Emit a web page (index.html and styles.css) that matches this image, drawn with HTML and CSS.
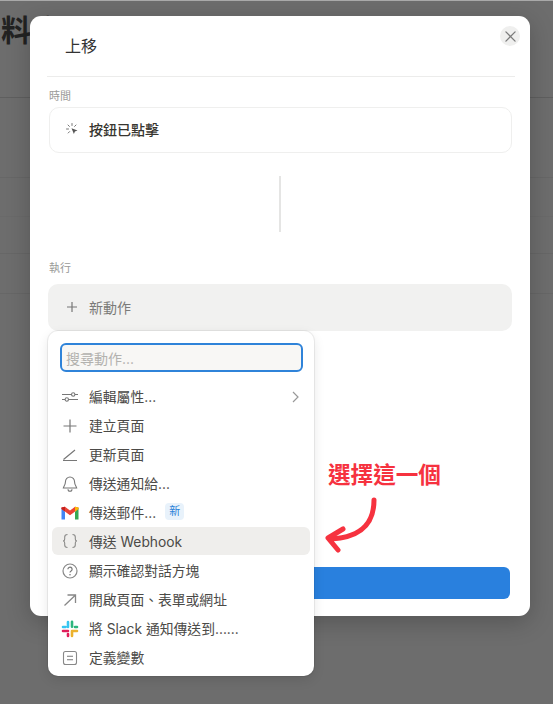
FILE: index.html
```html
<!DOCTYPE html>
<html lang="zh-Hant">
<head>
<meta charset="utf-8">
<title>上移</title>
<link rel="stylesheet" href="styles.css">
</head>
<body>
<div class="page">
  <h1 class="page-title">料庫</h1>
  <div class="bg-rows">
    <div class="bg-row r1"></div>
    <div class="bg-row r2"></div>
    <div class="bg-row r3"></div>
    <div class="bg-row r4"></div>
  </div>
</div>

<div class="modal">
  <div class="modal-head">上移</div>
  <button class="close" aria-label="關閉">
    <svg width="11" height="11" viewBox="0 0 12 12"><path d="M1 1l10 10M11 1L1 11" fill="none" stroke="#7b7b7b" stroke-width="1.4" stroke-linecap="round"/></svg>
  </button>
  <div class="modal-body">
    <div class="label">時間</div>
    <div class="trigger">
      <svg class="trigger-icon" width="14" height="14" viewBox="0 0 14 14"><g fill="none" stroke="#777" stroke-width="1" stroke-linecap="round"><path d="M7 1.500v2M3 3l1.400 1.400M1.500 7h2M11 3L9.600 4.400M3.200 11l1.400-1.400"/></g><path d="M6.500 6.200l6 2.200-2.600 1-1 2.700z" fill="#555"/></svg>
      <span>按鈕已點擊</span>
    </div>
    <div class="connector"></div>
    <div class="label">執行</div>
    <div class="new-action">
      <svg width="12" height="12" viewBox="0 0 12 12"><path d="M6 1v10M1 6h10" stroke="#777" stroke-width="1.200" fill="none"/></svg>
      <span>新動作</span>
    </div>
    <div class="primary"></div>
  </div>
</div>

<div class="menu">
  <div class="search">搜尋動作...</div>
  <ul class="menu-list">
    <li class="item">
      <svg class="ico" viewBox="0 0 18 18"><g fill="none" stroke="#777" stroke-width="1.100"><path d="M1 6.500h9.500M14 6.500h3M1 11.500h3M7.500 11.500H17"/><circle cx="12.200" cy="6.500" r="1.700"/><circle cx="5.800" cy="11.500" r="1.700"/></g></svg>
      <span>編輯屬性...</span>
      <svg class="chev" width="7" height="12" viewBox="0 0 7 12"><path d="M1 1l5 5-5 5" fill="none" stroke="#999" stroke-width="1.200"/></svg>
    </li>
    <li class="item">
      <svg class="ico" viewBox="0 0 18 18"><path d="M9 2.500v13M2.500 9h13" fill="none" stroke="#777" stroke-width="1.200"/></svg>
      <span>建立頁面</span>
    </li>
    <li class="item">
      <svg class="ico" viewBox="0 0 18 18"><path d="M2 14.500h14M2.500 13.500L14 4" fill="none" stroke="#777" stroke-width="1.200"/></svg>
      <span>更新頁面</span>
    </li>
    <li class="item">
      <svg class="ico" viewBox="0 0 18 18"><path d="M9 2a4.500 4.500 0 0 0-4.500 4.600c0 3.400-2 4.900-2.200 6.400h13.400c-.2-1.500-2.200-3-2.200-6.400A4.500 4.500 0 0 0 9 2zM7 14.200a2 2 0 0 0 4 0" fill="none" stroke="#777" stroke-width="1.100"/></svg>
      <span>傳送通知給...</span>
    </li>
    <li class="item">
      <svg class="ico" viewBox="0 0 18 18"><path d="M.5 4v11.500h3.500V7.500z" fill="#4285f4"/><path d="M14 7.500v8h3.500V4z" fill="#34a853"/><path d="M14 2.800L9 6.600 4 2.800.5 3.500V5L9 11.200 17.500 5V3.500z" fill="#ea4335"/><path d="M14 2.800v4.700L17.500 5V3.500z" fill="#fbbc04"/><path d="M.5 3.500V5L4 7.500V2.800z" fill="#c5221f"/></svg>
      <span>傳送郵件...</span>
      <span class="badge">新</span>
    </li>
    <li class="item active">
      <svg class="ico" viewBox="0 0 18 18"><path d="M6.500 2.500c-2.200 0-2.800 1-2.800 2.500v2c0 1.300-.6 2-1.700 2 1.100 0 1.700.7 1.700 2v2c0 1.500.6 2.500 2.800 2.500M11.500 2.500c2.200 0 2.800 1 2.800 2.500v2c0 1.300.6 2 1.700 2-1.100 0-1.700.7-1.700 2v2c0 1.500-.6 2.500-2.800 2.500" fill="none" stroke="#8a8a88" stroke-width="1.100"/></svg>
      <span>傳送 Webhook</span>
    </li>
    <li class="item">
      <svg class="ico" viewBox="0 0 18 18"><circle cx="9" cy="9" r="7" fill="none" stroke="#888" stroke-width="1.200"/><path d="M6.900 7.200a2.100 2.100 0 1 1 3.200 1.800c-.8.500-1.100.9-1.100 1.600" fill="none" stroke="#777" stroke-width="1.200"/><circle cx="9" cy="12.700" r=".8" fill="#777"/></svg>
      <span>顯示確認對話方塊</span>
    </li>
    <li class="item">
      <svg class="ico" viewBox="0 0 18 18"><path d="M3.500 14.500L14 4.500M6.500 4h8v8" fill="none" stroke="#888" stroke-width="1.300"/></svg>
      <span>開啟頁面、表單或網址</span>
    </li>
    <li class="item">
      <svg class="ico" viewBox="0 0 18 18"><g fill="none" stroke-width="2.600" stroke-linecap="round"><path d="M7 2v5M2 7h2.500" stroke="#36c5f0"/><path d="M11 1.800v5M16 7h-2" stroke="#2eb67d"/><path d="M11 16v-5M16 11h-5" stroke="#ecb22e"/><path d="M7 16v-2M2 11h5" stroke="#e01e5a"/></g></svg>
      <span>將 Slack 通知傳送到......</span>
    </li>
    <li class="item">
      <svg class="ico" viewBox="0 0 18 18"><rect x="2.500" y="2.500" width="13" height="13" rx="2" fill="none" stroke="#888" stroke-width="1.100"/><path d="M6 7.200h6M6 10.800h6" stroke="#777" stroke-width="1.100"/></svg>
      <span>定義變數</span>
    </li>
  </ul>
</div>

<div class="note">選擇這一個</div>
<svg class="arrow" width="60" height="60" viewBox="0 0 60 60"><path d="M54 5c0 20-9 37-43 39M23 34L8 43l10 12" fill="none" stroke="#f6323f" stroke-width="5" stroke-linecap="round" stroke-linejoin="round"/></svg>
</body>
</html>
```
FILE: styles.css
```css
* { box-sizing: border-box; }
html, body { margin: 0; height: 100%; }
body {
  position: relative;
  width: 553px;
  height: 704px;
  overflow: hidden;
  background: #6d6d6d;
  border-top: 1px solid #a9a9a9;
  font-family: Inter, "Liberation Sans", "Noto Sans CJK TC", sans-serif;
  color: #3b3b3a;
}
.page { height: 100%; }
.page-title {
  margin: 0;
  padding-top: 7px;
  padding-left: 1px;
  height: 97px;
  border-bottom: 1px solid #5f5f5f;
  font-size: 30px;
  line-height: 40px;
  font-weight: 700;
  color: #222;
  font-family: "Noto Sans CJK TC", sans-serif;
}
.bg-row { height: 1px; background: #676767; }
.r1 { margin-top: 79px; }
.r2 { margin-top: 38px; background: #6a6a6a; }
.r3 { margin-top: 36px; }
.r4 { margin-top: 39px; }

.modal {
  position: absolute;
  left: 30px;
  top: 15px;
  width: 500px;
  height: 600px;
  background: #fff;
  border-radius: 11px;
  box-shadow: 0 6px 24px rgba(0,0,0,.22);
}
.modal-head {
  margin: 0 15px 0 17px;
  height: 61px;
  padding: 19px 0 0 18px;
  font-size: 16px;
  line-height: 22px;
  color: #333;
  border-bottom: 1px solid #ececeb;
}
.close {
  position: absolute;
  right: 10px;
  top: 10px;
  width: 20px;
  height: 20px;
  border: 0;
  border-radius: 50%;
  padding: 0;
  background: #efefee;
  display: flex;
  align-items: center;
  justify-content: center;
}
.modal-body { padding: 0 18px; }
.label {
  margin-top: 12px;
  padding-left: 1px;
  font-size: 11px;
  line-height: 14px;
  color: #9a9a98;
}
.trigger {
  margin-top: 4px;
  margin-left: 1px;
  height: 46px;
  display: flex;
  align-items: center;
  gap: 10px;
  padding: 0 0 3px 15px;
  border: 1px solid #efefee;
  border-radius: 10px;
  font-size: 14px;
  font-weight: 500;
  color: #37352f;
  font-family: "Noto Sans CJK TC", sans-serif;
}
.trigger-icon { flex: none; }
.connector {
  width: 2px;
  height: 56px;
  margin: 23px 0 29px 231px;
  background: #e5e5e4;
}
.new-action {
  margin-top: 9px;
  height: 47px;
  display: flex;
  align-items: center;
  gap: 11px;
  padding: 0 0 2px 18px;
  background: #f1f1f0;
  border-radius: 10px;
  font-size: 14px;
  color: #7b7b79;
}
.primary {
  margin: 236px 2px 0 200px;
  height: 32px;
  background: #2980de;
  border-radius: 6px;
}

.menu {
  position: absolute;
  left: 48px;
  top: 330px;
  width: 266px;
  height: 345px;
  background: #fff;
  border-radius: 10px;
  padding: 12px 4px 0;
  box-shadow: 0 0 0 1px rgba(0,0,0,.06), 0 4px 12px rgba(0,0,0,.1);
}
.search {
  margin: 0 7px 0 8px;
  height: 29px;
  padding: 0 4px;
  display: flex;
  align-items: center;
  font-size: 14px;
  color: #b3b2af;
  background: #f8f7f5;
  border: 2px solid #2f83d9;
  border-radius: 6px;
}
.menu-list { list-style: none; margin: 10px 0 0; padding: 0; }
.item {
  height: 29px;
  display: flex;
  align-items: center;
  gap: 10px;
  padding: 0 0 2px 9px;
  font-size: 13.8px;
  color: #4b4a47;
  border-radius: 6px;
}
.item .ico { margin-top: 2px; }
.item.active { background: #efeeec; height: 28px; margin: 0 0 1px; padding-bottom: 0; }
.item.active .ico { margin-top: 0; }
.ico { width: 18px; height: 18px; flex: none; }
.chev { margin-left: auto; margin-right: 11px; margin-top: 2px; }
.badge {
  margin-left: -1px;
  padding: 1px 4px;
  font-size: 11px;
  line-height: 15px;
  color: #2b82d8;
  background: #e8f2fb;
  border-radius: 4px;
}

.note {
  position: absolute;
  left: 328px;
  top: 459px;
  font-size: 22.6px;
  line-height: 28px;
  font-weight: 700;
  color: #f6323f;
  font-family: "Noto Sans CJK TC", sans-serif;
}
.arrow { position: absolute; left: 320px; top: 494px; }
```
